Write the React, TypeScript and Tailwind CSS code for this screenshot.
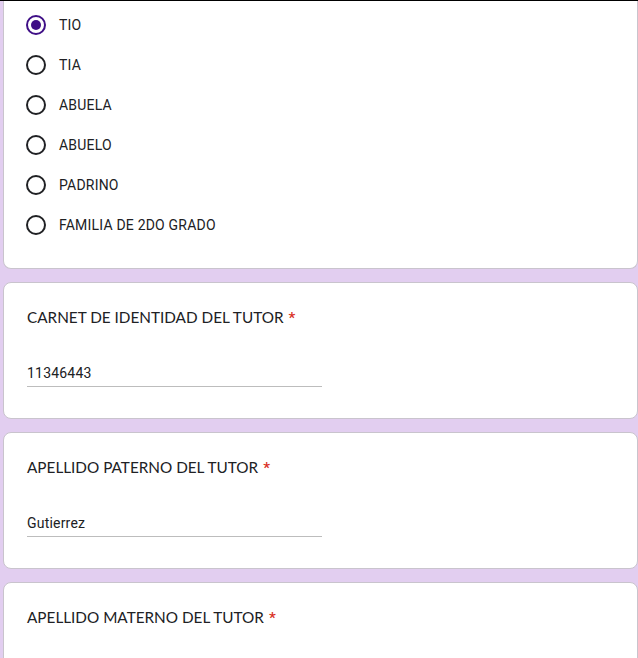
const options = ["TIO", "TIA", "ABUELA", "ABUELO", "PADRINO", "FAMILIA DE 2DO GRADO"];

const textFields = [
  { title: "CARNET DE IDENTIDAD DEL TUTOR", value: "11346443" },
  { title: "APELLIDO PATERNO DEL TUTOR", value: "Gutierrez" },
];

function Radio({ checked }: { checked: boolean }) {
  return (
    <div
      className={
        checked
          ? "w-5 h-5 rounded-full border-2 border-[#3f0f86] flex items-center justify-center shrink-0"
          : "w-5 h-5 rounded-full border-2 border-[#202124] shrink-0"
      }
    >
      {checked && <div className="w-2.5 h-2.5 rounded-full bg-[#3f0f86]" />}
    </div>
  );
}

function Title({ text }: { text: string }) {
  return (
    <div
      className="text-[15.3px] leading-6 text-[#202124]"
      style={{ fontFamily: "Lato, 'Open Sans', sans-serif" }}
    >
      {text}
      <span
        className="text-[#d93025] ml-[5px] font-medium"
        style={{ fontFamily: "Roboto, sans-serif" }}
      >
        *
      </span>
    </div>
  );
}

export default function App() {
  return (
    <div
      className="w-[638px] h-[658px] overflow-hidden bg-[#e2cef0] border-t border-black"
      style={{ fontFamily: "Roboto, 'Liberation Sans', sans-serif" }}
    >
      <div className="flex flex-col gap-[13px] pl-[3px]">
        {/* parentesco: tail of the card */}
        <div className="bg-white border-x border-b border-[#c9c4cd] rounded-b-lg pl-[22px] pt-[4px] pb-[23px]">
          {options.map((opt, i) => (
            <div key={opt} className="h-10 flex items-center gap-[13px]">
              <Radio checked={i === 0} />
              <span className="text-sm tracking-[0.2px] text-[#202124]">{opt}</span>
            </div>
          ))}
        </div>

        {textFields.map((f) => (
          <div
            key={f.title}
            className="bg-white border border-[#c9c4cd] rounded-lg pl-[23px] pt-[22px] pb-[31px]"
          >
            <Title text={f.title} />
            <div className="mt-[33px] w-[295px] border-b border-[#bdbdbd] pb-[3px]">
              <div className="text-sm leading-5 tracking-[0.2px] text-[#202124]">{f.value}</div>
            </div>
          </div>
        ))}

        <div className="bg-white border border-[#c9c4cd] rounded-lg pl-[23px] pt-[22px] pb-8 h-[120px]">
          <Title text="APELLIDO MATERNO DEL TUTOR" />
        </div>
      </div>
    </div>
  );
}
